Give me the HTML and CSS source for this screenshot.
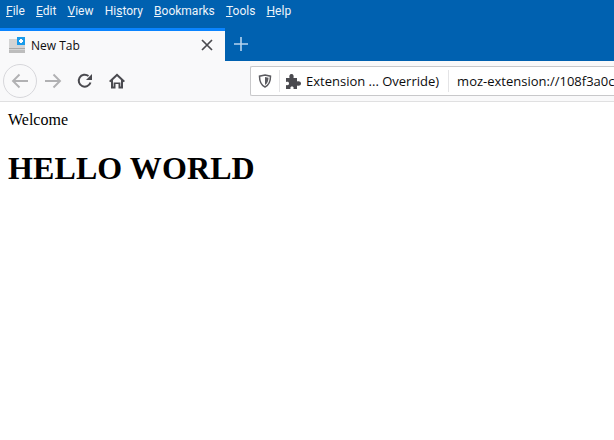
FILE: index.html
```html
<!DOCTYPE html>
<html lang="en">
<head>
<meta charset="utf-8">
<title>New Tab</title>
<link rel="stylesheet" href="styles.css">
</head>
<body>
<div class="browser">
  <nav class="menubar">
    <span class="menu"><u>F</u>ile</span>
    <span class="menu"><u>E</u>dit</span>
    <span class="menu"><u>V</u>iew</span>
    <span class="menu">Hi<u>s</u>tory</span>
    <span class="menu"><u>B</u>ookmarks</span>
    <span class="menu"><u>T</u>ools</span>
    <span class="menu"><u>H</u>elp</span>
  </nav>
  <div class="tabbar">
    <div class="tab">
      <svg class="favicon" width="16" height="16" viewBox="0 0 16 16"><path d="M0 2h10v4h6v10H0z" fill="#d4d4d4"/><path d="M0 11h16v1H0z" fill="#a8a8a8"/><path d="M0 13h16v3H0z" fill="#bdbdbd"/><rect x="8" y="0" width="8" height="8" fill="#1a9bea"/><path d="M11 2h2v1h1v2h-1v1h-2V5h-1V3h1z" fill="#fff"/></svg>
      <span class="tab-title">New Tab</span>
      <svg class="tab-close" width="12" height="12" viewBox="0 0 12 12"><path d="M1 1l10 10M11 1L1 11" stroke="#4a4a4f" stroke-width="1.7" fill="none"/></svg>
    </div>
    <svg class="new-tab" width="16" height="16" viewBox="0 0 16 16"><path d="M8 1v14M1 8h14" stroke="#b6d4ee" stroke-width="1.6" fill="none"/></svg>
  </div>
  <div class="toolbar">
    <div class="back">
      <svg width="18" height="16" viewBox="0 0 18 16"><path d="M17 8H2M8.500 1.500L2 8l6.500 6.500" stroke="#b1b1b3" stroke-width="1.900" fill="none"/></svg>
    </div>
    <svg class="forward" width="18" height="16" viewBox="0 0 18 16"><path d="M1 8h15M9.500 1.500L16 8l-6.500 6.500" stroke="#b1b1b3" stroke-width="1.900" fill="none"/></svg>
    <svg class="reload" width="16" height="16" viewBox="0 0 16 16"><path d="M13.500 9.500A6 6 0 1 1 11.500 3" stroke="#4a4a4f" stroke-width="2" fill="none"/><path d="M15 1v6H9z" fill="#4a4a4f"/></svg>
    <svg class="home" width="16" height="16" viewBox="0 0 16 16"><path fill-rule="evenodd" d="M8 .5L16 8l-1.300 1.300L14 8.700V15.500H9.500V11h-3v4.500H2V8.700l-.7.600L0 8zM8 3.300L4 7v6.500h.6V9.500h6.800v4h.6V7z" fill="#4a4a4f"/></svg>
    <div class="urlbar">
      <svg class="shield" width="14" height="14" viewBox="0 0 14 14"><path d="M7 1l5.500 1.200c0 5-1.500 8.800-5.500 10.800C3 11 1.500 7.200 1.500 2.200z" stroke="#5b5b60" stroke-width="1.500" fill="none"/><path d="M7 3l3.500.8C10.300 7 9.500 9.500 7 11z" fill="#5b5b60"/></svg>
      <span class="sep"></span>
      <svg class="puzzle" width="16" height="16" viewBox="0 0 16 16"><path d="M1 5h3.500C4 3 4.500 1 6.500 1S9 3 8.500 5H12v3.500c2-.5 4 0 4 2s-2 2.500-4 2V16H8.500c.5-2-.5-2.500-1.500-2.500S5 14 5.500 16H1v-4c2 .5 3 0 3-1.500S3 8.500 1 9z" fill="#4a4a4f"/></svg>
      <span class="ext-label">Extension ... Override)</span>
      <span class="sep sep-wide"></span>
      <span class="url">moz-extension://108f3a0c1d7e4b2a</span>
    </div>
  </div>
  <main class="page">
    <p class="welcome">Welcome</p>
    <h1 class="hello">HELLO WORLD</h1>
  </main>
</div>
</body>
</html>
```
FILE: styles.css
```css
* { box-sizing: border-box; }
html, body { margin: 0; height: 100%; overflow: hidden; background: #fff; }
.browser { width: 614px; height: 440px; display: flex; flex-direction: column; overflow: hidden; }
.menubar {
  height: 28px; background: #0061b0; display: flex; align-items: center;
  padding: 0 0 7px 6px; gap: 11.2px;
  font: 12px Roboto, "Noto Sans", sans-serif; color: #eef4fa;
}
.menu { white-space: nowrap; }
.tabbar { height: 33px; background: #0061b0; display: flex; align-items: stretch; }
.tab {
  width: 225px; background: #f9f9fa; border-top: 3px solid #0a84ff;
  display: flex; align-items: center; padding: 0 12px 2px 9px;
}
.favicon { flex: none; }
.tab-title { margin-left: 6px; font: 12px "Open Sans", "Noto Sans", sans-serif; color: #0c0c0d; flex: 1; }
.tab-close { flex: none; }
.new-tab { align-self: center; margin-left: 8px; margin-top: -1px; }
.toolbar {
  height: 41px; background: #f9f9fa; border-bottom: 1px solid #e0e0e1;
  display: flex; align-items: center; padding-left: 3px;
}
.back {
  width: 34px; height: 34px; border: 1px solid #d7d7db; border-radius: 50%;
  display: flex; align-items: center; justify-content: center; flex: none;
}
.forward { margin-left: 7px; flex: none; }
.reload { margin-left: 15px; flex: none; }
.home { margin-left: 16px; flex: none; }
.urlbar {
  margin-left: 125px; width: 400px; height: 30px; flex: none; background: #fff;
  border: 1px solid #c8c8ca; border-right: none; border-radius: 2px 0 0 2px;
  display: flex; align-items: center; padding-left: 7px;
  font: 13px "Open Sans", "Noto Sans", sans-serif; color: #0c0c0d; white-space: nowrap;
}
.shield { flex: none; }
.sep { width: 1px; height: 22px; background: #e4e4e6; margin-left: 7px; flex: none; }
.puzzle { margin-left: 5px; flex: none; }
.ext-label { margin-left: 5px; }
.sep-wide { margin-left: 9px; }
.url { margin-left: 8px; }
.page { flex: 1; padding: 8px; background: #fff; font-family: "Liberation Serif", "Times New Roman", serif; color: #000; }
.welcome { margin: 0; font-size: 16px; line-height: 18px; padding-top: 1px; }
.hello { margin: 21px 0 0; font-size: 32px; line-height: 37px; font-weight: bold; letter-spacing: .1px; }
```
